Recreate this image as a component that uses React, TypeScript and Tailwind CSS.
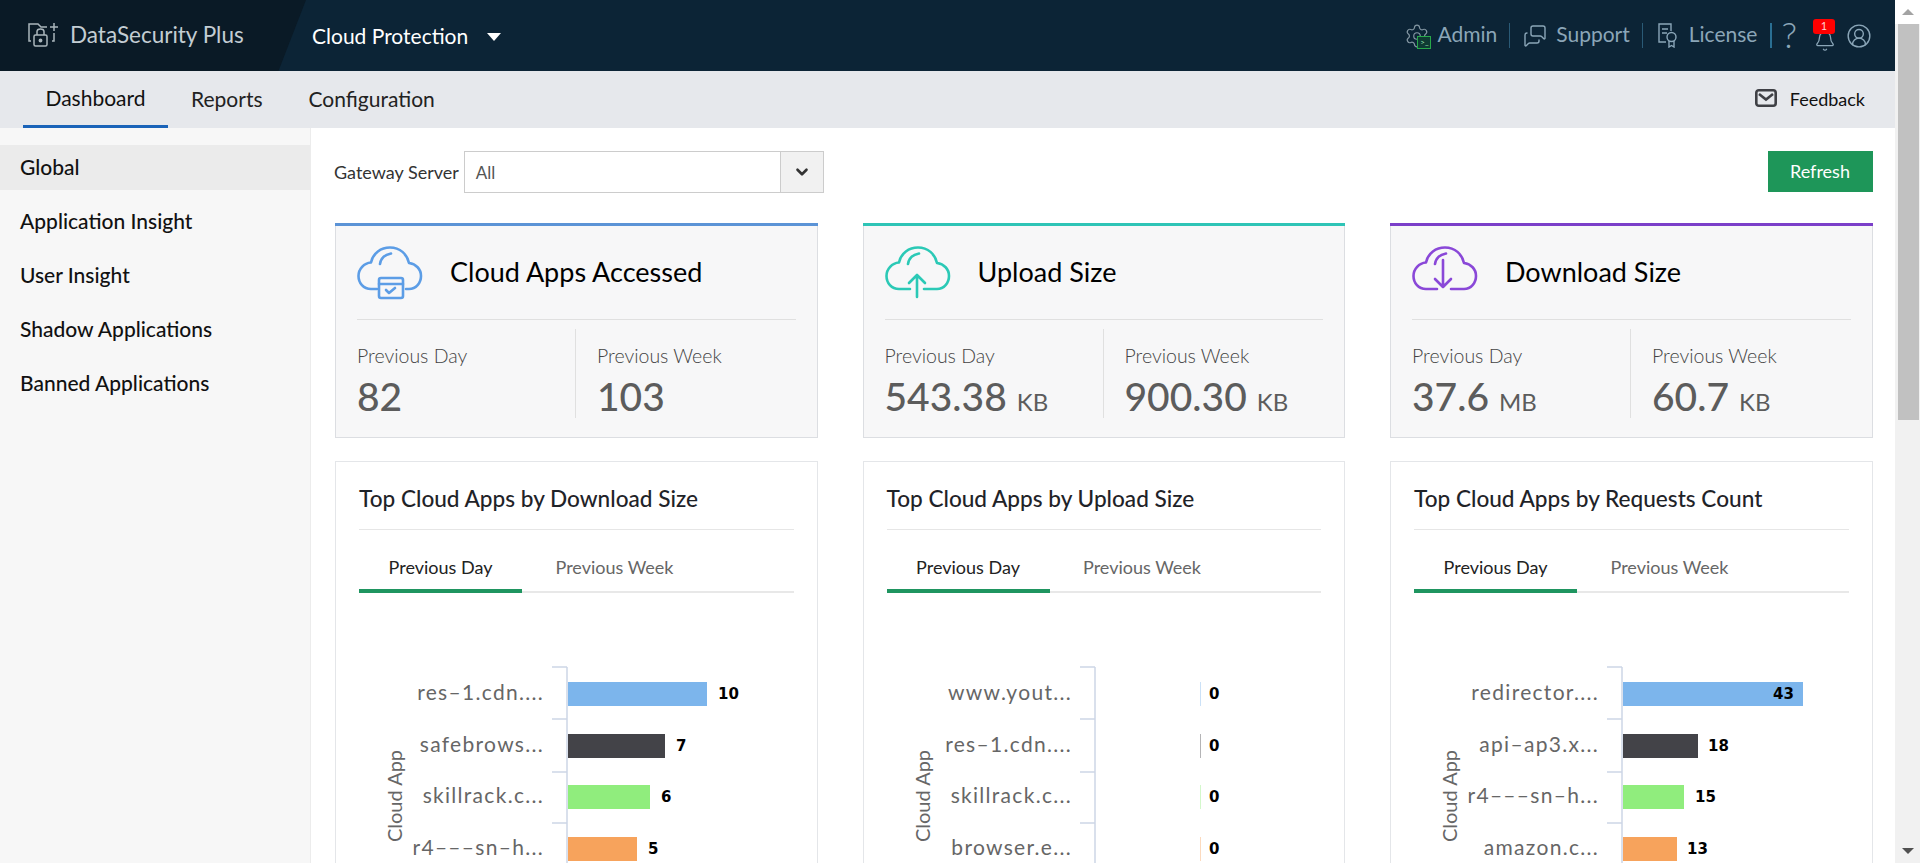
import { Settings, MessagesSquare, Bell, CircleUserRound, ChevronDown } from "lucide-react";

const PALETTE = ["#7cb5ec", "#434348", "#90ed7d", "#f7a35c"];

type Row = { label: string; value: number; end: number; labelX: number };

const stats = [
  { title: "Cloud Apps Accessed", color: "#5b93d6", icon: "#5c9de6", kind: "apps", day: "82", week: "103", dayUnit: "", weekUnit: "" },
  { title: "Upload Size", color: "#2ec4b6", icon: "#2bc9b6", kind: "up", day: "543.38", week: "900.30", dayUnit: "KB", weekUnit: "KB" },
  { title: "Download Size", color: "#7b3fc9", icon: "#8a48d8", kind: "down", day: "37.6", week: "60.7", dayUnit: "MB", weekUnit: "KB" },
];

const charts: { title: string; rows: Row[] }[] = [
  {
    title: "Top Cloud Apps by Download Size",
    rows: [
      { label: "res–1.cdn....", value: 10, end: 372, labelX: 383 },
      { label: "safebrows...", value: 7, end: 330, labelX: 341 },
      { label: "skillrack.c...", value: 6, end: 315, labelX: 326 },
      { label: "r4–––sn–h...", value: 5, end: 302, labelX: 313 },
    ],
  },
  {
    title: "Top Cloud Apps by Upload Size",
    rows: [
      { label: "www.yout...", value: 0, end: 337, labelX: 346 },
      { label: "res–1.cdn....", value: 0, end: 337, labelX: 346 },
      { label: "skillrack.c...", value: 0, end: 337, labelX: 346 },
      { label: "browser.e...", value: 0, end: 337, labelX: 346 },
    ],
  },
  {
    title: "Top Cloud Apps by Requests Count",
    rows: [
      { label: "redirector....", value: 43, end: 413, labelX: 383 },
      { label: "api–ap3.x...", value: 18, end: 308, labelX: 318 },
      { label: "r4–––sn–h...", value: 15, end: 294, labelX: 305 },
      { label: "amazon.c...", value: 13, end: 287, labelX: 297 },
    ],
  },
];

function CloudIcon({ kind, color }: { kind: string; color: string }) {
  return (
    <svg width="66" height="54" viewBox="0 0 66 54" fill="none" stroke={color} strokeWidth="2.600" strokeLinecap="round" strokeLinejoin="round">
      <path d={kind === "apps" ? "M20 43H14C6.500 43 1.500 37 1.500 30C1.500 23 7 17 14 16.500C16 7 24 1.500 33 1.500C43 1.500 50 8 52 17C59 18 64 23 64 30C64 37 59 43 52 43H49" : "M25 43H14C6.500 43 1.500 37 1.500 30C1.500 23 7 17 14 16.500C16 7 24 1.500 33 1.500C43 1.500 50 8 52 17C59 18 64 23 64 30C64 37 59 43 52 43H39"} />
      <path d="M23 18C24 12 28 8.500 34 7.500" />
      {kind === "apps" && (
        <>
          <rect x="22" y="32" width="24" height="20" rx="2" />
          <path d="M22 38H46M29 44L32 47L38 42" />
        </>
      )}
      {kind === "up" && <path d="M32 51V29M24 37L32 29L40 37" />}
      {kind === "down" && <path d="M31 14V41M23 33L31 41L39 33" />}
    </svg>
  );
}

function StatCard({ s }: { s: (typeof stats)[number] }) {
  return (
    <div className="h-[215px] border border-[#dcdee2] border-t-0 bg-[#f7f7f8]">
      <div className="-mx-px h-[3px]" style={{ backgroundColor: s.color }} />
      <div className="mx-[21px] flex h-[94px] items-center gap-[27px] border-b border-[#e0e0e0]">
        <CloudIcon kind={s.kind} color={s.icon} />
        <div className="text-[27px] text-black">{s.title}</div>
      </div>
      <div className="mx-[21px] mt-[9px] flex h-[89px]">
        <div className="w-[219px] border-r border-[#e0e0e0]">
          <div className="mt-[15px] text-[19.500px] leading-6 font-light text-[#444]">Previous Day</div>
          <div className="mt-[5px] text-[39px] leading-[46px] font-medium text-[#5c5c5c]">
            {s.day}
            {s.dayUnit && <span className="ml-[10px] text-[24px] font-normal">{s.dayUnit}</span>}
          </div>
        </div>
        <div className="pl-[21px]">
          <div className="mt-[15px] text-[19.500px] leading-6 font-light text-[#444]">Previous Week</div>
          <div className="mt-[5px] text-[39px] leading-[46px] font-medium text-[#5c5c5c]">
            {s.week}
            {s.weekUnit && <span className="ml-[10px] text-[24px] font-normal">{s.weekUnit}</span>}
          </div>
        </div>
      </div>
    </div>
  );
}

function BarChart({ rows }: { rows: Row[] }) {
  const ys = [89, 141, 192, 244];
  const ticks = [74, 126, 179, 230];
  return (
    <svg width="480" height="280" className="-ml-px block">
      <path d="M232 74V280" stroke="#ccd6e6" strokeWidth="1.500" fill="none" />
      {ticks.map((t) => (
        <path key={t} d={`M217 ${t}H232`} stroke="#ccd6e6" strokeWidth="1.500" fill="none" />
      ))}
      {rows.map((r, i) => (
        <g key={r.label}>
          {r.value > 0 ? (
            <rect x="233" y={ys[i]} width={r.end - 233} height="24" fill={PALETTE[i]} />
          ) : (
            <rect x={r.end} y={ys[i]} width="1" height="24" fill={PALETTE[i]} opacity="0.4" />
          )}
          <text x="209" y={ys[i] + 18} textAnchor="end" fontSize="21" letterSpacing="1.300" fill="#666" fontFamily="Lato, sans-serif">
            {r.label}
          </text>
          <text x={r.labelX} y={ys[i] + 17} fontSize="15" fontWeight="700" fill="#000" fontFamily="'DejaVu Sans', sans-serif">
            {r.value}
          </text>
        </g>
      ))}
      <text transform="translate(67 203) rotate(-90)" textAnchor="middle" fontSize="20" fill="#666" fontFamily="Lato, sans-serif">
        Cloud App
      </text>
    </svg>
  );
}

function ChartCard({ c }: { c: (typeof charts)[number] }) {
  return (
    <div className="h-[402px] overflow-hidden border border-b-0 border-[#e4e6e9] bg-white">
      <div className="mx-[23px] flex h-[68px] items-center border-b border-[#e6e6e6] pt-[7px] text-[22.600px] font-medium text-[#1f2328]">{c.title}</div>
      <div className="mx-[23px] flex h-[63px] border-b-2 border-[#e8e8e8]">
        <div className="-mb-[2px] flex w-[163px] items-center justify-center border-b-4 border-[#1f9560] pt-[15px] text-[18px] text-[#222]">Previous Day</div>
        <div className="-mb-[2px] ml-[11px] flex w-[163px] items-center justify-center pt-[12px] text-[18px] text-[#666]">Previous Week</div>
      </div>
      <BarChart rows={c.rows} />
    </div>
  );
}

export default function App() {
  return (
    <div className="flex h-[863px] w-[1920px] overflow-hidden bg-white [font-family:Lato,sans-serif]">
      <div className="flex w-[1895px] flex-col">
        {/* top bar */}
        <div className="relative flex h-[71px] items-center bg-[#0c2436]">
          <div className="absolute inset-y-0 left-0 w-[306px] bg-[#0a1a26] [clip-path:polygon(0_0,100%_0,91%_100%,0_100%)]" />
          <div className="relative flex w-[312px] items-center pl-[28px]">
            <svg width="31" height="25" viewBox="0 0 31 25" fill="none" stroke="#aab6bc" strokeWidth="1.500">
              <path d="M3 18H1V1H10L13 4H19" />
              <path d="M26 10V18H24" />
              <path d="M26 0V8M22 4H30" />
              <rect x="6" y="12" width="13" height="11" rx="1.500" />
              <path d="M9 12V8.500C9 5 16 5 16 8.500V12" />
              <circle cx="12.500" cy="17.500" r="1.200" fill="#aab6bc" />
            </svg>
            <span className="ml-[11px] pb-[2px] text-[22.500px] text-[#c3cdd3]">DataSecurity Plus</span>
          </div>
          <span className="relative text-[21px] text-white">Cloud Protection</span>
          <span className="relative ml-[19px] mt-[3px] h-0 w-0 border-x-[7px] border-t-[8px] border-x-transparent border-t-white" />
          <div className="relative ml-auto flex items-center pr-[23px] text-[21px] text-[#8ba6b8]">
            <div className="relative h-[26px] w-[26px]">
              <Settings size={26} strokeWidth={1.1} color="#8396a2" />
              <div className="absolute -right-[1px] bottom-0 flex h-[13px] w-[14px] items-center justify-center border border-[#27a84a] bg-[#0f3a33] text-[8px] leading-none text-[#9fe0b0]">&gt;_</div>
            </div>
            <span className="ml-[7px] pb-[4px]">Admin</span>
            <div className="ml-[12px] h-[25px] w-px bg-[#2a5a76]" />
            <MessagesSquare size={24} strokeWidth={1.4} color="#8ba6b8" className="ml-[13px] -scale-x-100" />
            <span className="ml-[9px] pb-[4px]">Support</span>
            <div className="ml-[12px] h-[25px] w-px bg-[#2a5a76]" />
            <svg width="20" height="25" viewBox="0 0 20 25" fill="none" stroke="#8ba6b8" strokeWidth="1.400" className="ml-[15px]">
              <path d="M8 19H1V1H13V8" />
              <path d="M4 6H10M4 10H9" />
              <circle cx="13.500" cy="14" r="4.500" />
              <path d="M11 18V24L13.500 22.500L16 24V18" />
            </svg>
            <span className="ml-[11px] pb-[4px]">License</span>
            <div className="ml-[13px] h-[25px] w-[2px] bg-[#2a6f93]" />
            <span className="ml-[9px] pb-[4px] text-[36px] leading-none font-light">?</span>
            <div className="relative ml-[17px] h-[26px] w-[22px]">
              <Bell size={22} strokeWidth={1.4} color="#8ba6b8" className="absolute top-[7px]" />
              <div className="absolute -top-[4px] -left-[1px] flex h-[15px] w-[22px] items-center justify-center rounded-[3px] bg-[#f00] text-[11px] text-[#ffd0d0]">1</div>
            </div>
            <CircleUserRound size={26} strokeWidth={1.3} color="#8ba6b8" className="ml-[10px]" />
          </div>
        </div>
        {/* nav */}
        <div className="flex h-[57px] items-stretch bg-[#e6e8ec] pl-[23px] pr-[30px] text-[21px] text-[#222]">
          <div className="flex w-[145px] items-center justify-center border-b-[3px] border-[#1a63b8] text-[#111]">Dashboard</div>
          <div className="ml-[23px] flex items-center pb-[2px]">Reports</div>
          <div className="ml-[46px] flex items-center pb-[2px]">Configuration</div>
          <div className="ml-auto flex items-center text-[18px] text-[#111]">
            <svg width="22" height="18" viewBox="0 0 22 18" fill="none" stroke="#3f4045" strokeWidth="2.600" className="-mt-[4px]">
              <rect x="1.300" y="1.300" width="19.400" height="15.400" rx="2.500" />
              <path d="M4 5L11 10.500L18 5" />
            </svg>
            <span className="ml-[13px]">Feedback</span>
          </div>
        </div>
        <div className="flex min-h-0 flex-1">
          {/* sidebar */}
          <div className="w-[311px] shrink-0 border-r border-[#ececec] bg-[#f7f7f7] pt-[17px] text-[21px] font-medium text-[#111]">
            <div className="flex h-[45px] items-center bg-[#ebebeb] pb-[1px] pl-[20px]">Global</div>
            <div className="flex h-[54px] items-center pl-[20px] pt-[7px]">Application Insight</div>
            <div className="flex h-[54px] items-center pl-[20px] pt-[7px]">User Insight</div>
            <div className="flex h-[54px] items-center pl-[20px] pt-[7px]">Shadow Applications</div>
            <div className="flex h-[54px] items-center pl-[20px] pt-[7px]">Banned Applications</div>
          </div>
          {/* content */}
          <div className="flex-1 pl-[24px] pr-[22.500px] pt-[23px]">
            <div className="flex h-[41px] items-center">
              <span className="-ml-px pt-[2px] text-[18px] text-[#333]">Gateway Server</span>
              <div className="ml-[5px] flex h-[42px] w-[360px] items-stretch border border-[#ccc] bg-white">
                <span className="flex flex-1 items-center pl-[11px] pt-[2px] text-[17px] text-[#555]">All</span>
                <span className="flex w-[43px] items-center justify-center border-l border-[#ccc] bg-[#f1f1f1]">
                  <ChevronDown size={18} strokeWidth={3.5} color="#333" />
                </span>
              </div>
              <div className="ml-auto flex h-[41px] w-[105px] items-center justify-center bg-[#1e9659] text-[18px] text-white">Refresh</div>
            </div>
            <div className="mt-[31px] grid grid-cols-3 gap-x-[45px] gap-y-[23px]">
              {stats.map((s) => (
                <StatCard key={s.title} s={s} />
              ))}
              {charts.map((c) => (
                <ChartCard key={c.title} c={c} />
              ))}
            </div>
          </div>
        </div>
      </div>
      {/* scrollbar */}
      <div className="flex w-[25px] flex-col items-center bg-[#f1f1f1]">
        <div className="flex h-[24px] w-full items-center justify-center bg-white">
          <span className="h-0 w-0 border-x-[6px] border-b-[6px] border-x-transparent border-b-[#a3a3a3]" />
        </div>
        <div className="ml-[1px] h-[396px] w-[21px] bg-[#c1c1c1]" />
        <div className="mt-auto flex h-[24px] w-full items-center justify-center">
          <span className="h-0 w-0 border-x-[6px] border-t-[6px] border-x-transparent border-t-[#505050]" />
        </div>
      </div>
    </div>
  );
}
